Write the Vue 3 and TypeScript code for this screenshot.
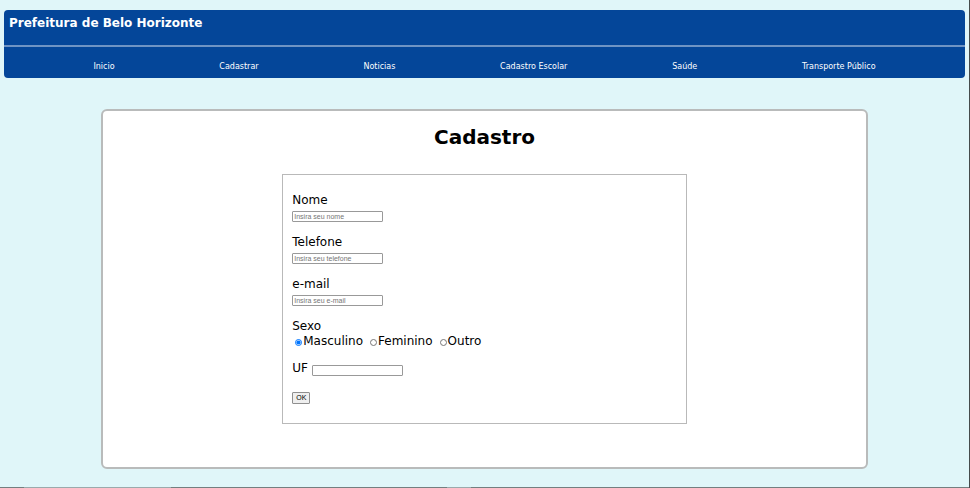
<script setup lang="ts">
import { reactive } from 'vue'

const links: string[] = ['Inicio', 'Cadastrar', 'Noticias', 'Cadastro Escolar', 'Saúde', 'Transporte Público']
const genders: string[] = ['Masculino', 'Feminino', 'Outro']

const form = reactive({ nome: '', telefone: '', email: '', sexo: 'Masculino', uf: '' })
</script>

<template>
  <div class="page">
    <header class="header">
      <div class="brand">Prefeitura de Belo Horizonte</div>
      <nav class="nav">
        <a v-for="link in links" :key="link" href="#">{{ link }}</a>
      </nav>
    </header>

    <main class="card">
      <h1>Cadastro</h1>
      <form class="form" @submit.prevent>
        <div class="field">
          <label for="nome">Nome</label>
          <input id="nome" v-model="form.nome" class="text" type="text" placeholder="Insira seu nome" />
        </div>
        <div class="field">
          <label for="telefone">Telefone</label>
          <input id="telefone" v-model="form.telefone" class="text" type="tel" placeholder="Insira seu telefone" />
        </div>
        <div class="field">
          <label for="email">e-mail</label>
          <input id="email" v-model="form.email" class="text" type="email" placeholder="Insira seu e-mail" />
        </div>
        <fieldset class="sexo">
          <legend>Sexo</legend>
          <div class="options">
            <label v-for="g in genders" :key="g" class="option">
              <input v-model="form.sexo" type="radio" name="sexo" :value="g" />{{ g }}
            </label>
          </div>
        </fieldset>
        <div class="uf">
          <label for="uf">UF</label>
          <input id="uf" v-model="form.uf" class="text" type="text" />
        </div>
        <button type="submit" class="ok">OK</button>
      </form>
    </main>

    <div class="edge"></div>
  </div>
</template>

<style>
body {
  margin: 0;
  background: #e0f6f9;
}
</style>

<style scoped>
.page {
  box-sizing: border-box;
  min-height: 100vh;
  display: flex;
  flex-direction: column;
  padding-top: 10px;
  border-right: 1px solid #454b4c;
  background: #e0f6f9;
  color: #000;
  font-family: Verdana, 'DejaVu Sans', sans-serif;
  font-size: 12px;
  line-height: 15px;
}
.header {
  margin: 0 4px;
  border-radius: 4px;
  background: #044699;
  color: #fff;
}
.brand {
  box-sizing: border-box;
  height: 35px;
  padding: 6px 5px;
  font-size: 12px;
  font-weight: bold;
}
.nav {
  display: flex;
  justify-content: space-around;
  padding: 15px 37px 6px;
  border-top: 2px solid #6f94c4;
  font-size: 8px;
  line-height: 10px;
}
.nav a {
  color: #fff;
  text-decoration: none;
}
.card {
  box-sizing: border-box;
  width: calc(80% - 8px);
  min-height: 360px;
  margin: 31px auto 18px;
  padding: 13px 0 43px;
  border: 2px solid #b9bbbb;
  border-radius: 6px;
  background: #fff;
}
h1 {
  margin: 0 0 24px;
  font-size: 20px;
  line-height: 26px;
  text-align: center;
}
.form {
  box-sizing: border-box;
  width: 53%;
  min-height: 250px;
  margin: 0 auto;
  padding: 18px 9px;
  border: 1px solid #b9b9b9;
}
.field {
  display: flex;
  flex-direction: column;
  align-items: flex-start;
  gap: 3px;
  margin-bottom: 13px;
}
.text {
  box-sizing: border-box;
  width: 91px;
  height: 11px;
  margin: 0;
  padding: 0 1px;
  border: 1px solid #999;
  border-radius: 1px;
  background: #fff;
  font-family: 'Liberation Sans', Arial, sans-serif;
  font-size: 7px;
  line-height: 9px;
}
.text::placeholder {
  color: #757575;
}
.sexo {
  margin: 0 0 12px;
  padding: 0;
  border: 0;
}
.sexo legend {
  padding: 0;
}
.options {
  display: flex;
  gap: 6px;
  padding-left: 2px;
}
.option {
  display: flex;
  align-items: center;
}
.option input {
  width: 7px;
  height: 7px;
  margin: 2px 1px 0;
}
.uf {
  display: flex;
  align-items: center;
  gap: 4px;
  margin-bottom: 16px;
}
.uf .text {
  margin-top: 4px;
}
.ok {
  display: block;
  width: 18px;
  height: 12px;
  padding: 0;
  border: 1px solid #8f8f8f;
  border-radius: 1px;
  background: #efefef;
  color: #000;
  font-family: 'Liberation Sans', Arial, sans-serif;
  font-size: 7px;
  line-height: 10px;
}
.edge {
  height: 1px;
  margin-top: auto;
  background: linear-gradient(90deg, #737f80 24px, #9aaaac 24px 171px, #737f80 171px 447px, #9aaaac 447px 471px, #737f80 471px);
}
</style>
